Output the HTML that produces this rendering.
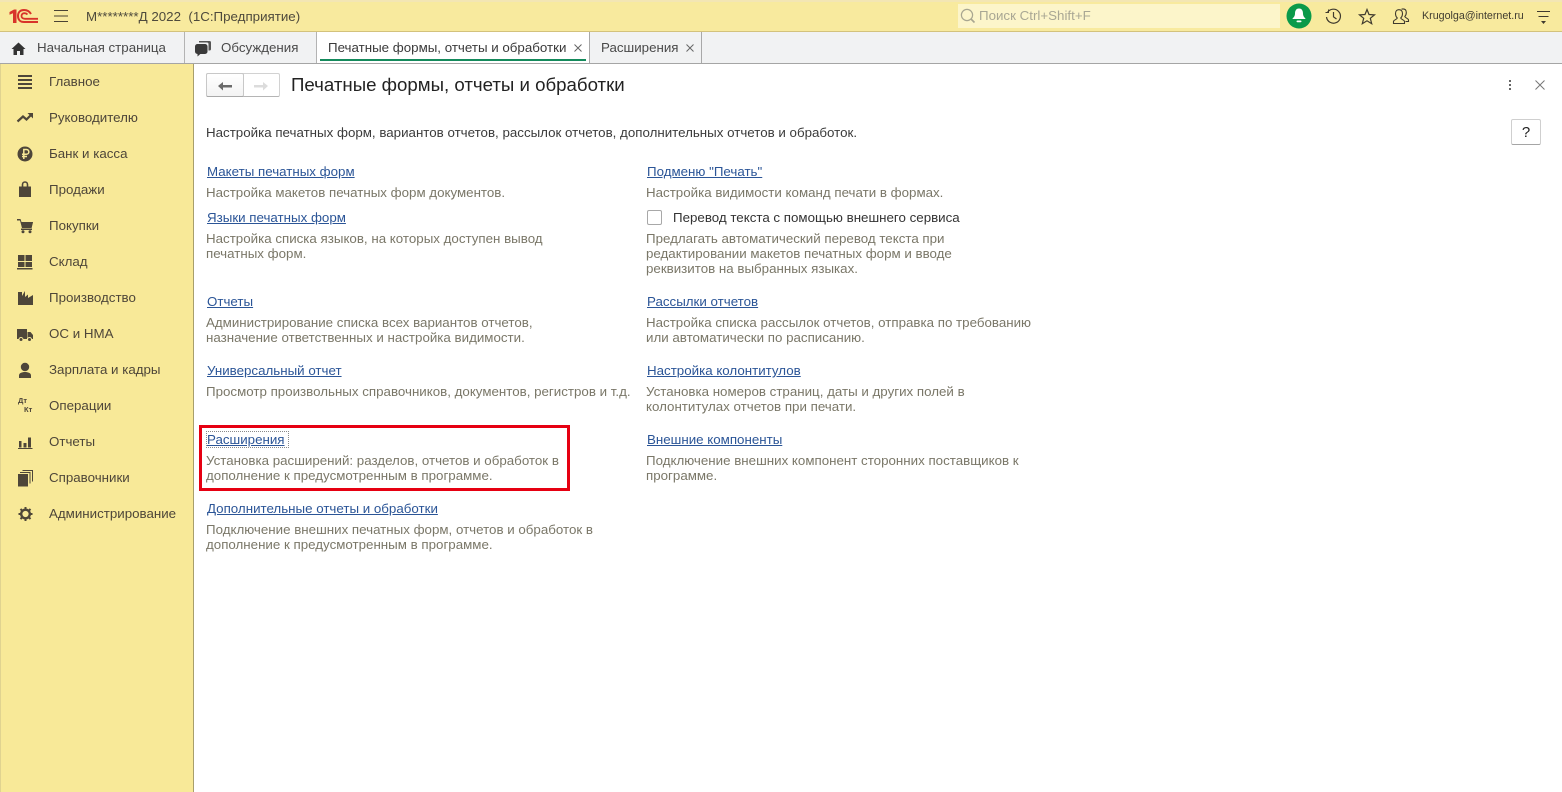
<!DOCTYPE html>
<html lang="ru"><head><meta charset="utf-8"><title>Печатные формы</title>
<style>
html,body{margin:0;padding:0}
body{width:1562px;height:792px;position:relative;overflow:hidden;background:#fff;font-family:"Liberation Sans",Arial,sans-serif;font-size:13.33px;color:#333}
.t{position:absolute;white-space:nowrap;line-height:15px}
.b{position:absolute}
.lnk{color:#2b5597;text-decoration:underline}
.g{color:#7a7768}
.m{color:#4e4639;left:49px}
.tab{color:#4a4a4a}
svg{position:absolute;overflow:visible}
</style></head><body>
<!-- top bar -->
<div class="b" style="left:0;top:0;width:1562px;height:32px;background:#f8ea9e;border-bottom:1px solid #d3c27c;box-sizing:border-box;border-top:2px solid #f3e6b4"></div>
<div class="t" style="left:86px;top:9px;color:#4e4a3c">М********Д 2022&nbsp; (1С:Предприятие)</div>
<div class="b" style="left:958px;top:4px;width:322px;height:24px;background:#fcf5ca"></div>
<div class="t" style="left:979px;top:8px;color:#a9a794">Поиск Ctrl+Shift+F</div>
<div class="t" style="left:1422px;top:9px;color:#403c30;font-size:10.7px">Krugolga@internet.ru</div>

<!-- tabs -->
<div class="b" style="left:0;top:32px;width:1562px;height:32px;background:#f1f2f3;border-bottom:1px solid #a5a5a5;box-sizing:border-box"></div>
<div class="b" style="left:184px;top:32px;width:1px;height:31px;background:#b3b3b3"></div>
<div class="b" style="left:316px;top:32px;width:274px;height:31px;background:#fff;border-left:1px solid #b3b3b3;border-right:1px solid #a8a8a8;box-sizing:border-box"></div>
<div class="b" style="left:701px;top:32px;width:1px;height:31px;background:#a8a8a8"></div>
<div class="b" style="left:320px;top:59px;width:266px;height:2px;background:#148a5c"></div>
<div class="t tab" style="left:37px;top:40px">Начальная страница</div>
<div class="t tab" style="left:221px;top:40px">Обсуждения</div>
<div class="t tab" style="left:328px;top:40px;color:#3a3a3a">Печатные формы, отчеты и обработки</div>
<div class="t tab" style="left:601px;top:40px">Расширения</div>

<!-- sidebar -->
<div class="b" style="left:0;top:64px;width:194px;height:728px;background:#f8e998;border-right:1px solid #a89f6c;border-left:1px solid #e0d390;box-sizing:border-box"></div>
<div class="t m" style="top:74px">Главное</div>
<div class="t m" style="top:110px">Руководителю</div>
<div class="t m" style="top:146px">Банк и касса</div>
<div class="t m" style="top:182px">Продажи</div>
<div class="t m" style="top:218px">Покупки</div>
<div class="t m" style="top:254px">Склад</div>
<div class="t m" style="top:290px">Производство</div>
<div class="t m" style="top:326px">ОС и НМА</div>
<div class="t m" style="top:362px">Зарплата и кадры</div>
<div class="t m" style="top:398px">Операции</div>
<div class="t m" style="top:434px">Отчеты</div>
<div class="t m" style="top:470px">Справочники</div>
<div class="t m" style="top:506px">Администрирование</div>
<div class="t" style="left:18px;top:397px;font-size:7.5px;font-weight:bold;color:#4e4639;line-height:8px">Дт</div>
<div class="t" style="left:24px;top:406px;font-size:7.5px;font-weight:bold;color:#4e4639;line-height:8px">Кт</div>

<!-- page-coordinate icon layer -->
<svg style="left:0;top:0" width="1562" height="792" viewBox="0 0 1562 792">
<!-- 1C logo -->
<path d="M9.500 12L14 9.500H16.500V23H13V13.200L9.500 14.800z" fill="#d8342a"/>
<g fill="none" stroke="#d8342a">
<path d="M31 14C29 10.500 26 10 24 10C19.500 10 18 13 18 16C18 20 20.500 22 24 22H38" stroke-width="2"/>
<path d="M27.500 14.500C26.500 13.500 25.500 13.200 24.500 13.200C22.500 13.200 21.500 14.500 21.500 16C21.500 17.800 23 18.800 25 18.800H38" stroke-width="1.800"/>
</g>
<!-- hamburger -->
<path d="M54 10.500H68M54 16H68M54 21.500H68" stroke="#4a4334" stroke-width="1"/>
<!-- search -->
<circle cx="967" cy="15" r="5.600" fill="none" stroke="#a8a690" stroke-width="1.200"/><path d="M971 19L974.500 22.500" stroke="#a8a690" stroke-width="1.600"/>
<!-- bell -->
<circle cx="1299" cy="16" r="12.500" fill="#0a9a4a"/>
<path d="M1299 8.500c-3 0-4 2.500-4 5 0 3-1.700 4-2.700 5.500h13.400c-1-1.500-2.700-2.500-2.700-5.500 0-2.500-1-5-4-5z" fill="#fff"/><rect x="1296.500" y="20.500" width="5" height="1.800" rx=".9" fill="#fff"/>
<!-- history -->
<g fill="none" stroke="#3f3a2e" stroke-width="1.200"><path d="M1327.500 12.500A7 7 0 1 1 1326.500 17"/><path d="M1325.500 12.500H1328.500V9.500" stroke-width="1"/><path d="M1333.500 12V16.800L1336.500 19"/></g>
<!-- star -->
<path d="M1367 9.500L1369 14.500 1374.500 14.900 1370.300 18.300 1371.700 23.700 1367 20.800 1362.300 23.700 1363.700 18.300 1359.500 14.900 1365 14.500z" fill="none" stroke="#3f3a2e" stroke-width="1.200"/>
<!-- users -->
<g fill="none" stroke="#3f3a2e" stroke-width="1.100">
<path d="M1393.500 23.500V21.500C1393.500 20 1396.800 19.500 1397.300 18C1396 16.800 1395.500 15 1395.500 13.500C1395.500 11 1397 9.700 1399 9.700C1401 9.700 1402.500 11 1402.500 13.500C1402.500 15 1402 16.800 1400.700 18C1401.200 19.500 1404.500 20 1404.500 21.500V23.500z"/>
<path d="M1401.500 9.300C1402 9 1402.500 8.900 1403 8.900C1405 8.900 1406.300 10.200 1406.300 12.500C1406.300 14 1405.800 15.500 1404.800 16.500C1405.300 18 1408.500 18.500 1408.500 20V21.500H1405.500"/>
</g>
<!-- menu right -->
<path d="M1537 11.500H1550M1538.500 16.500H1548.500" stroke="#3f3a2e" stroke-width="1"/><path d="M1541 21H1546L1543.500 24z" fill="#3f3a2e"/>
<!-- home -->
<path d="M18.500 42.500L25.500 49H23.500V55H20V51H17V55H13.500V49H11.500z" fill="#333"/>
<!-- chat -->
<path d="M199 41H209.500a1.500 1.500 0 0 1 1.500 1.500V49a1.500 1.500 0 0 1-1.500 1.500H208.500V44a1.500 1.500 0 0 0-1.500-1.500H199z" fill="#555"/>
<rect x="195" y="44" width="12.500" height="10" rx="2.500" fill="#3a3a3a"/>
<path d="M197.500 53V56.500L201.500 53z" fill="#3a3a3a"/>
<!-- tab closes -->
<path d="M574.500 44.500L581.500 51.500M581.500 44.500L574.500 51.500M686.500 44.500L693.500 51.500M693.500 44.500L686.500 51.500" stroke="#666" stroke-width="1"/>

<!-- sidebar icons -->
<g fill="#4e4639">
<path d="M18 75h14v2h-14zM18 79h14v2h-14zM18 83h14v2h-14zM18 87h14v2h-14z"/>
<path d="M17.500 121.500L23 116.500l3.500 3L31 115" fill="none" stroke="#4e4639" stroke-width="2.200"/><path d="M27.500 113h5.500v5.500z"/>
<circle cx="25" cy="154" r="7.500"/><path d="M23.800 159V149.500H26.500a2.300 2.300 0 0 1 0 4.700H22M22 156.500H27" fill="none" stroke="#f8e998" stroke-width="1.500"/>
<path d="M19 186.500H31V197H19z"/><path d="M22.500 187V184.500a2.500 2.500 0 0 1 5 0V187" fill="none" stroke="#4e4639" stroke-width="1.600"/>
<path d="M17 219H20.500L21.500 222H33L31.500 228H22L20 220.500H17z"/><path d="M21.500 222H33L31.500 228H22z"/><rect x="21" y="228.500" width="11" height="1.500"/><circle cx="23" cy="231.800" r="1.500"/><circle cx="30" cy="231.800" r="1.500"/>
<path d="M18 255h6.500v6H18zM25.500 255H32v6h-6.500zM18 262h6.500v5H18zM25.500 262H32v5h-6.500zM17 268h15.500v1.500H17z"/>
<path d="M18 305V292H22V296L25 291V297L28 294.500V298L33 295V305H18z"/>
<path d="M17 329H27V339H17zM27.500 332H30.500L33 335V339H27.500z"/><circle cx="21" cy="339.500" r="2" stroke="#f8e998"/><circle cx="29.500" cy="339.500" r="2" stroke="#f8e998"/>
<circle cx="25" cy="367" r="4.200"/><path d="M19 378V375.500c0-2.500 3-3.500 6-3.500s6 1 6 3.500V378z"/>
<path d="M19 441h2.500v6.500H19zM23.500 443h3v4.500h-3zM28 437.500h3v10h-3zM18 448h14.500v1H18z"/>
<path d="M18 474H28V486.500H18z"/><path d="M20 472.500H30V483.500M22.500 470.500H32.500V481.500" fill="none" stroke="#4e4639" stroke-width="1"/>
</g>
<circle cx="25.500" cy="514" r="4.300" fill="none" stroke="#4e4639" stroke-width="2.400"/>
<path d="M25.500 507V521M18.500 514H32.500M20.500 509L30.500 519M30.500 509L20.500 519" stroke="#4e4639" stroke-width="2" stroke-dasharray="2.400 9.400"/>

<!-- header icons -->
<path d="M1510 80v2M1510 84v2M1510 88v2" stroke="#666" stroke-width="2"/>
<path d="M1535.500 80.500L1544.500 89.500M1544.500 80.500L1535.500 89.500" stroke="#777" stroke-width="1"/>
</svg>

<!-- header -->
<div class="b" style="left:206px;top:73px;width:74px;height:24px;border:1px solid #d2d2d2;border-bottom-color:#b5b5b5;border-radius:2px;box-sizing:border-box;background:#fff"></div>
<div class="b" style="left:206px;top:73px;width:38px;height:24px;border:1px solid #c8c8c8;border-bottom-color:#a8a8a8;border-radius:2px;box-sizing:border-box;background:linear-gradient(#fff,#f3f3f3)"></div>
<svg style="left:218px;top:81px" width="14" height="10"><path d="M0 5L5 1V4H14V6.500H5V9.500z" fill="#6a6a6a"/></svg>
<svg style="left:254px;top:81px" width="14" height="10"><path d="M14 5L9 1V4H0V6.500H9V9.500z" fill="#dcdcdc"/></svg>
<div class="t" style="left:291px;top:74px;font-size:18.670px;line-height:22px;color:#222">Печатные формы, отчеты и обработки</div>
<div class="b" style="left:1511px;top:119px;width:30px;height:26px;border:1px solid #cfcfcf;border-bottom-color:#a5a5a5;border-radius:2px;box-sizing:border-box;background:#fff;text-align:center;font-size:15px;line-height:25px;color:#222">?</div>
<div class="t" style="left:206px;top:125px;color:#3b3b3b">Настройка печатных форм, вариантов отчетов, рассылок отчетов, дополнительных отчетов и обработок.</div>

<!-- left col -->
<div class="t lnk" style="left:207px;top:164px">Макеты печатных форм</div>
<div class="t g" style="left:206px;top:185px">Настройка макетов печатных форм документов.</div>
<div class="t lnk" style="left:207px;top:210px">Языки печатных форм</div>
<div class="t g" style="left:206px;top:231px">Настройка списка языков, на которых доступен вывод</div>
<div class="t g" style="left:206px;top:246px">печатных форм.</div>
<div class="t lnk" style="left:207px;top:294px">Отчеты</div>
<div class="t g" style="left:206px;top:315px">Администрирование списка всех вариантов отчетов,</div>
<div class="t g" style="left:206px;top:330px">назначение ответственных и настройка видимости.</div>
<div class="t lnk" style="left:207px;top:363px">Универсальный отчет</div>
<div class="t g" style="left:206px;top:384px">Просмотр произвольных справочников, документов, регистров и т.д.</div>
<div class="t lnk" style="left:207px;top:432px">Расширения</div>
<div class="b" style="left:206px;top:431px;width:83px;height:17px;border:1px dotted #8a8a8a;box-sizing:border-box"></div>
<div class="t g" style="left:206px;top:453px">Установка расширений: разделов, отчетов и обработок в</div>
<div class="t g" style="left:206px;top:468px">дополнение к предусмотренным в программе.</div>
<div class="b" style="left:199px;top:425px;width:371px;height:66px;border:3px solid #e60012;box-sizing:border-box"></div>
<div class="t lnk" style="left:207px;top:501px">Дополнительные отчеты и обработки</div>
<div class="t g" style="left:206px;top:522px">Подключение внешних печатных форм, отчетов и обработок в</div>
<div class="t g" style="left:206px;top:537px">дополнение к предусмотренным в программе.</div>

<!-- right col -->
<div class="t lnk" style="left:647px;top:164px">Подменю "Печать"</div>
<div class="t g" style="left:646px;top:185px">Настройка видимости команд печати в формах.</div>
<div class="b" style="left:647px;top:210px;width:15px;height:15px;border:1px solid #a8a8a8;border-radius:2px;box-sizing:border-box;background:#fff"></div>
<div class="t" style="left:673px;top:210px;color:#333">Перевод текста с помощью внешнего сервиса</div>
<div class="t g" style="left:646px;top:231px">Предлагать автоматический перевод текста при</div>
<div class="t g" style="left:646px;top:246px">редактировании макетов печатных форм и вводе</div>
<div class="t g" style="left:646px;top:261px">реквизитов на выбранных языках.</div>
<div class="t lnk" style="left:647px;top:294px">Рассылки отчетов</div>
<div class="t g" style="left:646px;top:315px">Настройка списка рассылок отчетов, отправка по требованию</div>
<div class="t g" style="left:646px;top:330px">или автоматически по расписанию.</div>
<div class="t lnk" style="left:647px;top:363px">Настройка колонтитулов</div>
<div class="t g" style="left:646px;top:384px">Установка номеров страниц, даты и других полей в</div>
<div class="t g" style="left:646px;top:399px">колонтитулах отчетов при печати.</div>
<div class="t lnk" style="left:647px;top:432px">Внешние компоненты</div>
<div class="t g" style="left:646px;top:453px">Подключение внешних компонент сторонних поставщиков к</div>
<div class="t g" style="left:646px;top:468px">программе.</div>
</body></html>
